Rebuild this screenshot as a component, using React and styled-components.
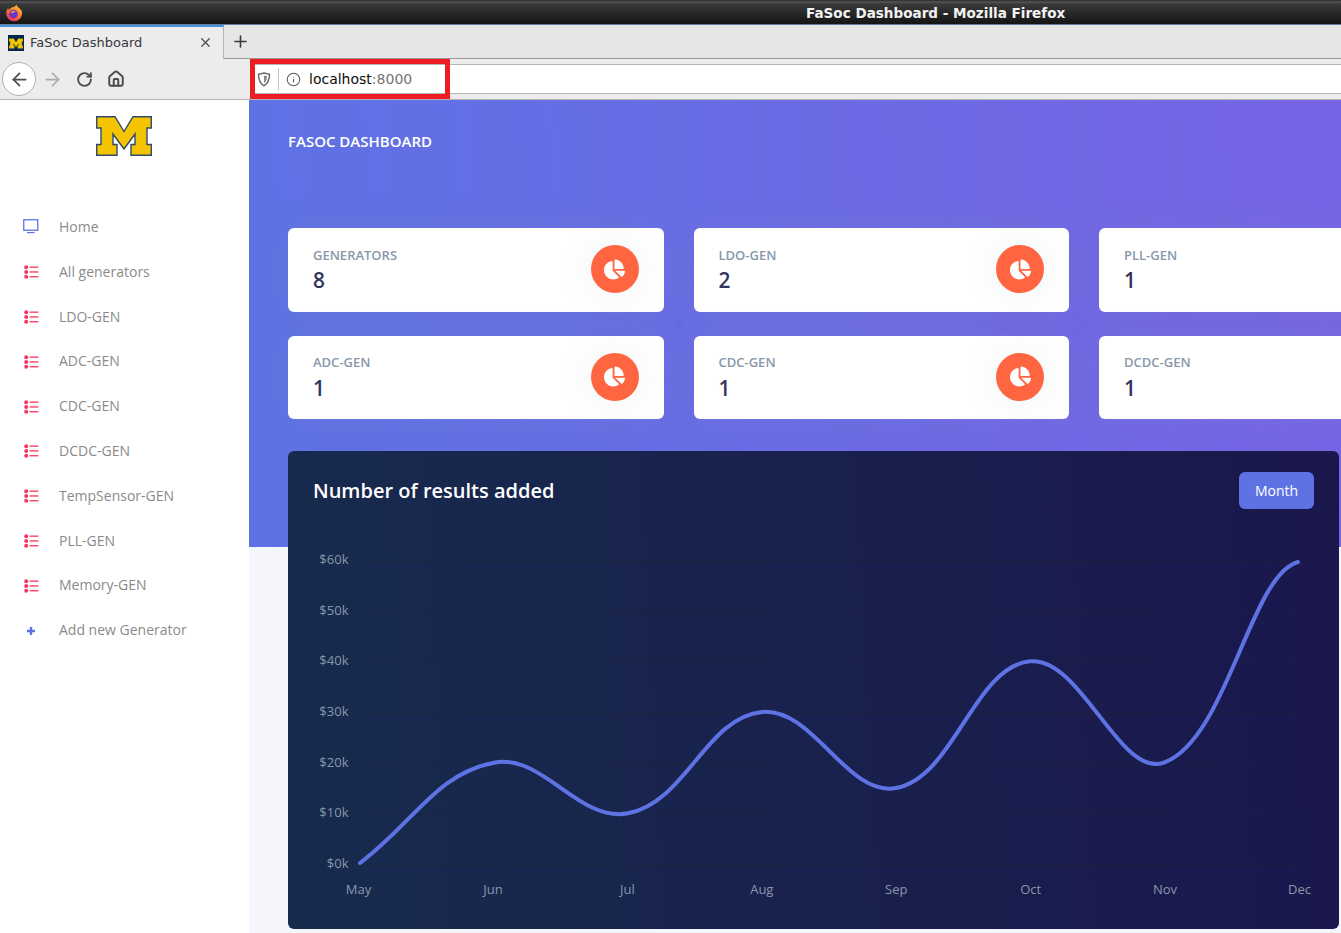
import React from "react";
import styled, { createGlobalStyle } from "styled-components";
import { ArrowLeft, ArrowRight, RotateCw, House, X, Plus, Info } from "lucide-react";
import { FaChartPie } from "react-icons/fa";

const navItems = [
  "All generators",
  "LDO-GEN",
  "ADC-GEN",
  "CDC-GEN",
  "DCDC-GEN",
  "TempSensor-GEN",
  "PLL-GEN",
  "Memory-GEN",
];

const stats = [
  { title: "Generators", value: 8 },
  { title: "LDO-GEN", value: 2 },
  { title: "PLL-GEN", value: 1 },
  { title: "ADC-GEN", value: 1 },
  { title: "CDC-GEN", value: 1 },
  { title: "DCDC-GEN", value: 1 },
];

const months = ["May", "Jun", "Jul", "Aug", "Sep", "Oct", "Nov", "Dec"];
const values = [0, 20, 10, 30, 15, 40, 20, 60];
const ticks = [0, 10, 20, 30, 40, 50, 60];

const xFor = (i) => 360 + i * 134;
const yFor = (v) => 864 - (v * 304) / 60;
const labelX = (i) => 358.5 + i * 134.43;

// same spline as chart.js with tension 0.4
function linePath() {
  const pts = values.map((v, i) => ({ x: xFor(i), y: yFor(v) }));
  pts[0].y = 863;
  pts[pts.length - 1].y = 562;
  const controls = pts.map((cur, i) => {
    const prev = pts[i - 1] || cur;
    const next = pts[i + 1] || cur;
    const d01 = Math.hypot(cur.x - prev.x, cur.y - prev.y);
    const d12 = Math.hypot(next.x - cur.x, next.y - cur.y);
    const fa = (0.4 * d01) / (d01 + d12);
    const fb = (0.4 * d12) / (d01 + d12);
    return {
      px: cur.x - fa * (next.x - prev.x),
      py: cur.y - fa * (next.y - prev.y),
      nx: cur.x + fb * (next.x - prev.x),
      ny: cur.y + fb * (next.y - prev.y),
    };
  });
  // the line flattens out as it reaches Dec
  controls[pts.length - 1].px = 1250;
  controls[pts.length - 1].py = 575;
  let d = `M${pts[0].x} ${pts[0].y}`;
  for (let i = 1; i < pts.length; i++) {
    d += ` C${controls[i - 1].nx} ${controls[i - 1].ny} ${controls[i].px} ${controls[i].py} ${pts[i].x} ${pts[i].y}`;
  }
  return d;
}

function FirefoxIcon() {
  return (
    <svg width="18" height="18" viewBox="0 0 18 18">
      <defs>
        <linearGradient id="ffOuter" x1="0.8" y1="0" x2="0.2" y2="1">
          <stop offset="0" stopColor="#ffc52e" />
          <stop offset="0.5" stopColor="#ff7a2a" />
          <stop offset="1" stopColor="#e5206e" />
        </linearGradient>
      </defs>
      <path
        d="M11.5 0.5c.2 1.7 1.2 2.3 2.6 3.4 1.9 1.5 3 3 3 5.4a8 8 0 1 1-16 0c0-2.2.8-4 2.2-5.4 0 1 .3 1.6.9 2C5 4 7.5 3 9.5 2.7c.8-.6 1.5-1.3 2-2.2z"
        fill="url(#ffOuter)"
      />
      <circle cx="8.5" cy="10" r="4.3" fill="#6a35c9" />
      <path d="M5 8.5c1.5-1.5 4-2.2 6.5-.8-1.5-.2-2.5.3-3 1.3z" fill="#ff9a3c" />
    </svg>
  );
}

function MichiganM({ width, height, stroke }) {
  return (
    <svg width={width} height={height} viewBox="0 0 56 40">
      <path
        d="M.7.7H19L28 15.5 37 .7H55.3V12H51V28.5H55.3V39.3H35V28.5H39V18L28 33 17 18V28.5H21V39.3H.7V28.5H5V12H.7z"
        fill="#f5c400"
        stroke={stroke}
        strokeWidth="1.4"
      />
    </svg>
  );
}

function MonitorIcon() {
  return (
    <svg width="16" height="15" viewBox="0 0 16 15">
      <rect x="0.75" y="0.75" width="14" height="10.5" fill="none" stroke="#5e72e4" strokeWidth="1.3" />
      <rect x="4" y="13" width="7.5" height="1.2" fill="#5e72e4" />
    </svg>
  );
}

function BulletListIcon() {
  return (
    <svg width="15" height="14" viewBox="0 0 15 14" fill="#f5365c">
      <circle cx="2.2" cy="2.2" r="2" />
      <circle cx="2.2" cy="7" r="2" />
      <circle cx="2.2" cy="11.8" r="2" />
      <rect x="5.6" y="1.5" width="8.8" height="1.3" />
      <rect x="5.6" y="6.3" width="8.8" height="1.3" />
      <rect x="5.6" y="11.1" width="8.8" height="1.3" />
    </svg>
  );
}

function FatPlusIcon() {
  return (
    <svg width="8" height="8" viewBox="0 0 8 8">
      <path d="M2.8 0h2.4v2.8H8v2.4H5.2V8H2.8V5.2H0V2.8h2.8z" fill="#5e72e4" />
    </svg>
  );
}

function ShieldIcon() {
  return (
    <svg width="14" height="15" viewBox="0 0 14 15">
      <path d="M7 1l5.5 1.3c0 5-.6 8.8-5.5 11.5C2.1 11.1 1.5 7.3 1.5 2.3z" fill="none" stroke="#6a6a6e" strokeWidth="1.5" />
      <path d="M7 3.5l3 .8c0 3-.5 5.3-3 7z" fill="#8a8a8e" />
    </svg>
  );
}

function Chart() {
  return (
    <ChartSvg viewBox="288 530 1051 399">
      {ticks.map((t) => (
        <g key={t}>
          <GridLine x1="360" x2="1299" y1={Math.round(yFor(t)) + 0.5} y2={Math.round(yFor(t)) + 0.5} />
          <AxisText x="348.5" y={yFor(t) + 4} textAnchor="end">
            ${t}k
          </AxisText>
        </g>
      ))}
      {months.map((m, i) => (
        <AxisText key={m} x={labelX(i)} y="894" textAnchor="middle">
          {m}
        </AxisText>
      ))}
      <path d={linePath()} fill="none" stroke="#5e72e4" strokeWidth="4" strokeLinecap="round" />
    </ChartSvg>
  );
}

export default function App() {
  return (
    <Window>
      <GlobalStyle />
      <TitleBar>
        <FirefoxIcon />
        <WindowTitle>FaSoc Dashboard - Mozilla Firefox</WindowTitle>
      </TitleBar>
      <TabStrip>
        <ActiveTab>
          <Favicon>
            <MichiganM width={14} height={11} stroke="#f5c400" />
          </Favicon>
          <TabLabel>FaSoc Dashboard</TabLabel>
          <CloseTab>
            <X size={15} color="#4a4a4f" strokeWidth={2} />
          </CloseTab>
        </ActiveTab>
        <NewTab>
          <Plus size={19} color="#38383d" strokeWidth={2} />
        </NewTab>
      </TabStrip>
      <Toolbar>
        <NavButtons>
          <BackButton>
            <ArrowLeft size={21} color="#4a4a4f" strokeWidth={2} />
          </BackButton>
          <ToolButton>
            <ArrowRight size={21} color="#adadae" strokeWidth={2} />
          </ToolButton>
          <ToolButton>
            <RotateCw size={17} color="#4a4a4f" strokeWidth={2.6} />
          </ToolButton>
          <ToolButton>
            <House size={18} color="#4a4a4f" strokeWidth={2.6} />
          </ToolButton>
        </NavButtons>
        <UrlBar>
          <ShieldIcon />
          <UrlDivider />
          <Info size={15} color="#5c5c61" strokeWidth={1.7} />
          <UrlText>
            localhost<UrlPort>:8000</UrlPort>
          </UrlText>
        </UrlBar>
        <RedHighlight />
      </Toolbar>
      <Body>
        <Sidebar>
          <LogoRow>
            <MichiganM width={56} height={40} stroke="#2f4a6b" />
          </LogoRow>
          <NavItem>
            <NavIcon>
              <MonitorIcon />
            </NavIcon>
            Home
          </NavItem>
          {navItems.map((item) => (
            <NavItem key={item}>
              <NavIcon $top={2} $left={1}>
                <BulletListIcon />
              </NavIcon>
              {item}
            </NavItem>
          ))}
          <NavItem>
            <NavIcon $top={2} $left={4}>
              <FatPlusIcon />
            </NavIcon>
            Add new Generator
          </NavItem>
        </Sidebar>
        <Main>
          <Hero>
            <HeroTitle>FaSoc Dashboard</HeroTitle>
            <StatGrid>
              {stats.map((s) => (
                <StatCard key={s.title}>
                  <StatText>
                    <StatLabel>{s.title}</StatLabel>
                    <StatValue>{s.value}</StatValue>
                  </StatText>
                  <StatIcon>
                    <FaChartPie size={21} color="#fff" />
                  </StatIcon>
                </StatCard>
              ))}
            </StatGrid>
          </Hero>
          <ChartCard>
            <ChartHeader>
              <ChartTitle>Number of results added</ChartTitle>
              <MonthButton>Month</MonthButton>
            </ChartHeader>
            <Chart />
          </ChartCard>
        </Main>
      </Body>
    </Window>
  );
}

const GlobalStyle = createGlobalStyle`
  * {
    box-sizing: border-box;
  }

  html,
  body {
    margin: 0;
    padding: 0;
    background: #fff;
    overflow: hidden;
  }
`;

const Window = styled.div`
  width: 1341px;
  height: 933px;
  display: flex;
  flex-direction: column;
  overflow: hidden;
  font-family: "Open Sans", sans-serif;
`;

const TitleBar = styled.div`
  height: 25px;
  flex: none;
  display: flex;
  align-items: center;
  padding: 2px 0 0 5px;
  background: linear-gradient(#2a2a2a 0, #555 2px, #3a3a3a 4px, #161616 23px);
  border-bottom: 1px solid #5f7f9f;
`;

const WindowTitle = styled.div`
  margin-left: 783px;
  color: #f2f2f2;
  font-family: "DejaVu Sans", sans-serif;
  font-weight: 700;
  font-size: 13.55px;
`;

const TabStrip = styled.div`
  height: 34px;
  flex: none;
  display: flex;
  background: #e6e6e5;
  border-bottom: 1px solid #9a9a9a;
`;

const ActiveTab = styled.div`
  width: 224px;
  height: 34px;
  display: flex;
  align-items: center;
  padding: 0 10px 0 8px;
  background: #ececec;
  border-top: 2px solid #4a90d9;
  border-right: 1px solid #b5b5b5;
`;

const Favicon = styled.div`
  width: 16px;
  height: 16px;
  display: flex;
  align-items: center;
  justify-content: center;
  background: #00274c;
`;

const TabLabel = styled.div`
  flex: 1;
  margin: 0 0 2px 6px;
  color: #38383d;
  font-family: "DejaVu Sans", sans-serif;
  font-size: 13px;
`;

const CloseTab = styled.div`
  display: flex;
  margin-bottom: 2px;
`;

const NewTab = styled.div`
  width: 32px;
  display: flex;
  align-items: center;
  justify-content: center;
`;

const Toolbar = styled.div`
  position: relative;
  height: 41px;
  flex: none;
  display: flex;
  align-items: center;
  background: #ececec;
  border-bottom: 1px solid #b5b5b5;
`;

const NavButtons = styled.div`
  width: 250px;
  flex: none;
  display: flex;
  align-items: center;
  padding-left: 2px;
`;

const BackButton = styled.div`
  width: 34px;
  height: 34px;
  display: flex;
  align-items: center;
  justify-content: center;
  background: #fff;
  border: 1px solid #b1b1b1;
  border-radius: 50%;
`;

const ToolButton = styled.div`
  width: 32px;
  display: flex;
  justify-content: center;
`;

const UrlBar = styled.div`
  flex: 1;
  height: 30px;
  display: flex;
  align-items: center;
  padding-left: 7px;
  background: #fff;
  border-top: 1px solid #b5b5b5;
  border-bottom: 1px solid #b5b5b5;
`;

const UrlDivider = styled.div`
  width: 1px;
  height: 22px;
  margin: 0 7px 0 7px;
  background: #c4c4c4;
`;

const UrlText = styled.div`
  margin-left: 8px;
  color: #0c0c0d;
  font-family: "DejaVu Sans", sans-serif;
  font-size: 14px;
`;

const UrlPort = styled.span`
  color: #737373;
`;

const RedHighlight = styled.div`
  position: absolute;
  left: 250px;
  top: 0;
  width: 200px;
  height: 40px;
  border: 5px solid #ed1c24;
  pointer-events: none;
`;

const Body = styled.div`
  flex: 1;
  min-height: 0;
  display: flex;
`;

const Sidebar = styled.nav`
  width: 249px;
  flex: none;
  background: #fff;
`;

const LogoRow = styled.div`
  display: flex;
  justify-content: center;
  padding: 16px 1px 0 0;
  margin-bottom: 48.1px;
  line-height: 0;
`;

const NavItem = styled.div`
  height: 44.8px;
  display: flex;
  align-items: center;
  padding-left: 23px;
  color: #8a8a8a;
  font-size: 14px;
`;

const NavIcon = styled.span`
  width: 36px;
  flex: none;
  display: flex;
  align-items: center;
  padding: ${(p) => p.$top || 0}px 0 0 ${(p) => p.$left || 0}px;
`;

const Main = styled.main`
  flex: 1;
  min-width: 0;
  background: #f5f6fb;
  overflow: hidden;
`;

// the real window is wider than this crop, the gradient ends further right
const Hero = styled.section`
  height: 447px;
  padding: 31px 0 0 39px;
  background: linear-gradient(87deg, #5e72e4, #825ee4) no-repeat;
  background-size: 1623px 100%;
  background-color: #7863e3;
`;

const HeroTitle = styled.h1`
  margin: 0;
  height: 97px;
  color: #fff;
  font-size: 15px;
  font-weight: 600;
  line-height: 20px;
  text-transform: uppercase;
`;

const StatGrid = styled.div`
  display: grid;
  grid-template-columns: repeat(3, 375.5px);
  grid-auto-rows: 83.5px;
  gap: 24px 30px;
`;

const StatCard = styled.div`
  display: flex;
  align-items: flex-start;
  justify-content: space-between;
  padding: 17px 25px 0;
  background: #fff;
  border-radius: 6px;
  box-shadow: 0 0 32px rgba(136, 152, 170, 0.15);
`;

const StatText = styled.div`
  padding-top: 0.5px;
`;

const StatLabel = styled.div`
  color: #8898aa;
  font-size: 13px;
  font-weight: 600;
  line-height: 18px;
  text-transform: uppercase;
`;

const StatValue = styled.div`
  margin-top: 4.5px;
  color: #32325d;
  font-size: 20.8px;
  font-weight: 600;
  line-height: 24px;
`;

const StatIcon = styled.div`
  width: 48px;
  height: 48px;
  display: flex;
  align-items: center;
  justify-content: center;
  background: #fe6540;
  border-radius: 50%;
  box-shadow: 0 0 32px rgba(136, 152, 170, 0.15);
`;

const ChartCard = styled.section`
  position: relative;
  width: 1051px;
  height: 478px;
  margin: -96px 0 0 39px;
  display: flex;
  flex-direction: column;
  background: linear-gradient(87deg, #172b4d, #1a174d);
  border-radius: 6px;
  overflow: hidden;
`;

const ChartHeader = styled.div`
  display: flex;
  align-items: center;
  justify-content: space-between;
  padding: 21px 25px;
`;

const ChartTitle = styled.h3`
  margin: 0;
  color: #fff;
  font-size: 20px;
  font-weight: 600;
`;

const MonthButton = styled.button`
  width: 75px;
  height: 37px;
  padding: 0;
  background: #5e72e4;
  border: none;
  border-radius: 6px;
  color: #fff;
  font-family: "Open Sans", sans-serif;
  font-size: 14px;
  box-shadow: 0 4px 6px rgba(50, 50, 93, 0.11), 0 1px 3px rgba(0, 0, 0, 0.08);
`;

const ChartSvg = styled.svg`
  display: block;
  width: 1051px;
  height: 399px;
`;

const GridLine = styled.line`
  stroke: #212529;
  stroke-opacity: 0.7;
  stroke-width: 1;
  stroke-dasharray: 2 2;
`;

const AxisText = styled.text`
  fill: #8898aa;
  font-family: "Open Sans", sans-serif;
  font-size: 13px;
`;
